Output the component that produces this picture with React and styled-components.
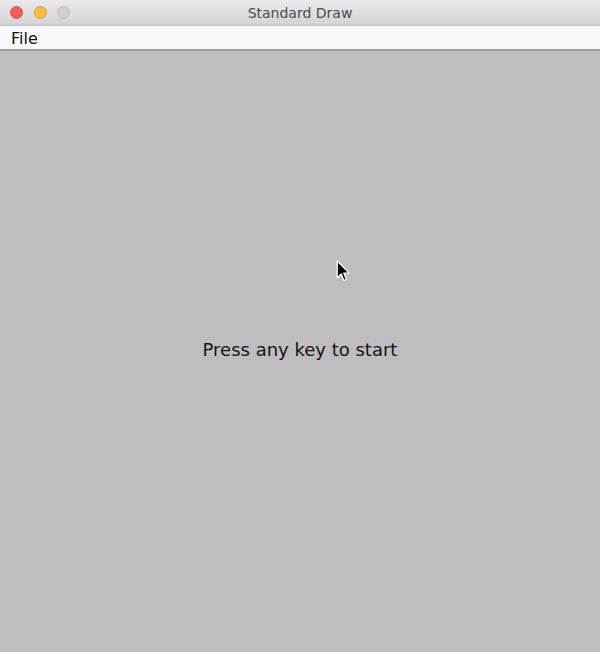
import styled, { createGlobalStyle } from "styled-components";

const GlobalStyle = createGlobalStyle`
    html, body {
        margin: 0;
        padding: 0;
        background: #bfbdc0;
    }
    * {
        box-sizing: border-box;
    }
`;

export default function App() {
    return (
        <>
            <GlobalStyle />
            <Window>
                <TitleBar>
                    <Lights>
                        <Light color="#ee5f5a" border="#d8504b" />
                        <Light color="#f6bd44" border="#dea236" />
                        <Light color="#d0cfd0" border="#bdbcbd" />
                    </Lights>
                    <Title>Standard Draw</Title>
                </TitleBar>
                <MenuBar>
                    <MenuItem>File</MenuItem>
                </MenuBar>
                <Canvas>
                    <Cursor width="15" height="23" viewBox="0 0 14 22">
                        <path
                            d="M1 1 L1 17 L4.8 13.4 L7.4 19.6 L9.8 18.6 L7.3 12.6 L12.4 12.6 Z"
                            fill="#000"
                            stroke="#fff"
                            strokeWidth="1.2"
                            strokeLinejoin="round"
                        />
                    </Cursor>
                    <Message>Press any key to start</Message>
                </Canvas>
            </Window>
        </>
    );
}

const Window = styled.div`
    width: 600px;
    height: 652px;
    display: flex;
    flex-direction: column;
    background: #bfbdc0;
    overflow: hidden;
`;

const TitleBar = styled.div`
    height: 26px;
    flex-shrink: 0;
    display: flex;
    align-items: center;
    justify-content: center;
    position: relative;
    background: linear-gradient(to bottom, #ebe9eb, #d4d2d4);
    border-bottom: 1px solid #c4c2c4;
`;

const Lights = styled.div`
    position: absolute;
    left: 10px;
    top: 6px;
    display: flex;
    gap: 10.5px;
`;

const Light = styled.span`
    width: 13px;
    height: 13px;
    border-radius: 50%;
    background: ${props => props.color};
    border: 1px solid ${props => props.border};
`;

const Title = styled.span`
    font-family: "DejaVu Sans", "Noto Sans", sans-serif;
    font-size: 14px;
    color: #4a4a4a;
    padding-top: 1px;
`;

const MenuBar = styled.div`
    height: 25px;
    flex-shrink: 0;
    display: flex;
    align-items: center;
    padding-left: 11px;
    background: #f8f7f9;
    border-bottom: 2px solid #9e9d9f;
`;

const MenuItem = styled.span`
    font-family: "DejaVu Sans", "Noto Sans", sans-serif;
    font-size: 16px;
    color: #111;
    padding-top: 1px;
`;

const Canvas = styled.div`
    flex: 1;
    position: relative;
    display: flex;
    justify-content: center;
    padding-top: 288px;
    background: #bfbdc0;
`;

const Cursor = styled.svg`
    position: absolute;
    left: 336px;
    top: 209px;
`;

const Message = styled.div`
    font-family: "DejaVu Sans", "Noto Sans", sans-serif;
    font-size: 18px;
    color: #141414;
    height: 24px;
`;
